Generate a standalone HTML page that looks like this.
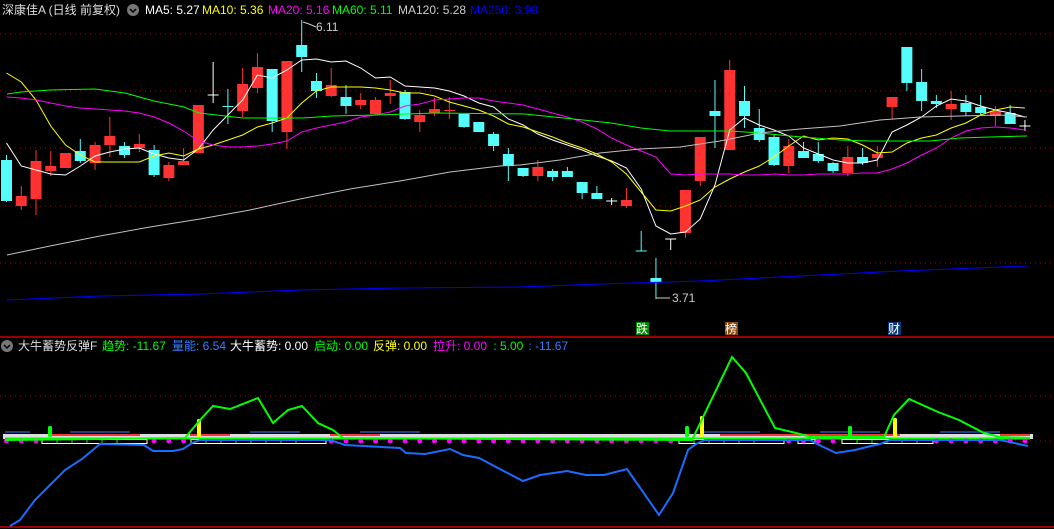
<!DOCTYPE html>
<html><head><meta charset="utf-8"><style>
html,body{margin:0;padding:0;background:#000;width:1054px;height:529px;overflow:hidden}
body{font-family:"Liberation Sans","Noto Sans CJK SC",sans-serif;font-size:12px}
.t{position:absolute;white-space:pre;line-height:14px}
svg{position:absolute;left:0;top:0}
</style></head><body>
<svg id="s" width="1054" height="529" xmlns="http://www.w3.org/2000/svg"></svg>
<div class="t" style="left:2px;top:3px;color:#ddd">深康佳A (日线 前复权)</div>
<div class="t" style="left:145px;top:3px;color:#fff">MA5: 5.27</div>
<div class="t" style="left:202px;top:3px;color:#ff0">MA10: 5.36</div>
<div class="t" style="left:268px;top:3px;color:#f0f">MA20: 5.16</div>
<div class="t" style="left:332px;top:3px;color:#0f0">MA60: 5.11</div>
<div class="t" style="left:398px;top:3px;color:#ccc">MA120: 5.28</div>
<div class="t" style="left:470px;top:3px;color:#00f">MA250: 3.98</div>
<div class="t" style="left:18px;top:339px;color:#ddd">大牛蓄势反弹F</div>
<div class="t" style="left:102px;top:339px;color:#0f0">趋势: -11.67</div>
<div class="t" style="left:172px;top:339px;color:#3a7cff">量能: 6.54</div>
<div class="t" style="left:230px;top:339px;color:#fff">大牛蓄势: 0.00</div>
<div class="t" style="left:314px;top:339px;color:#0f0">启动: 0.00</div>
<div class="t" style="left:373px;top:339px;color:#ff0">反弹: 0.00</div>
<div class="t" style="left:433px;top:339px;color:#f0f">拉升: 0.00</div>
<div class="t" style="left:490px;top:339px;color:#0f0"> : 5.00</div>
<div class="t" style="left:525px;top:339px;color:#3a7cff"> : -11.67</div>
<div class="t" style="left:316px;top:20px;color:#ccc">6.11</div>
<div class="t" style="left:672px;top:291px;color:#ccc">3.71</div>
<div class="t" style="left:636px;top:322px;width:13px;height:13px;background:#080;color:#fff;font-size:12px">跌</div>
<div class="t" style="left:725px;top:322px;width:13px;height:13px;background:#8a4a10;color:#fff;font-size:12px">榜</div>
<div class="t" style="left:888px;top:322px;width:13px;height:13px;background:#0a3a7a;color:#fff;font-size:12px">财</div>
<script>
const s=document.getElementById('s');let h='';
const X=i=>6.5+(i-1)*14.76;
[34,91,148,206,263,396].forEach(y=>h+=`<line x1="0" x2="1054" y1="${y}" y2="${y}" stroke="#a00" stroke-dasharray="1,4"/>`);
h+=`<line x1="1000" x2="1054" y1="441" y2="441" stroke="#a00" stroke-dasharray="1,4"/>`;
h+=`<line x1="0" x2="1054" y1="337" y2="337" stroke="#c00" stroke-width="1.5"/><line x1="0" x2="1054" y1="527" y2="527" stroke="#c00" stroke-width="1.5"/>`;
h+=`<circle cx="133" cy="10" r="6" fill="#777"/><path d="M130 9l3 3 3-3" stroke="#000" fill="none" stroke-width="1.5"/>`;
h+=`<circle cx="7" cy="346" r="6" fill="#777"/><path d="M4 345l3 3 3-3" stroke="#000" fill="none" stroke-width="1.5"/>`;
const C=[[160,201,155,202,'c'],[196,206,186,210,'r'],[161,199,150,215,'r'],[166,171,151,176,'r'],[153,168,153,168,'r'],[151,161,139,163,'c'],[145,163,142,170,'r'],[136,145,117,157,'r'],[146,155,142,158,'c'],[144,148,134,152,'r'],[150,175,145,177,'c'],[165,178,162,181,'r'],[161,165,148,165,'r'],[105,153,105,153,'r'],[95,95,62,103,'w'],[106,106,89,124,'c'],[84,111,68,117,'r'],[67,88,53,93,'r'],[69,121,69,132,'c'],[61,132,61,149,'r'],[45,57,20,72,'c'],[81,91,73,98,'c'],[85,96,68,97,'r'],[97,106,85,114,'c'],[100,105,93,109,'r'],[100,114,97,115,'r'],[93,96,80,104,'r'],[92,119,90,120,'c'],[115,122,110,132,'r'],[109,113,98,116,'r'],[110,111,97,119,'r'],[114,127,114,128,'c'],[122,132,122,132,'c'],[134,146,132,151,'c'],[154,166,148,181,'c'],[168,176,168,177,'c'],[167,176,160,181,'r'],[171,177,169,181,'c'],[171,177,167,177,'c'],[182,193,182,199,'c'],[193,199,186,199,'c'],[201,201,198,205,'w'],[200,206,188,208,'r'],[251,251,231,251,'cb'],[278,282,258,299,'c'],[239,239,239,250,'wt'],[190,233,190,238,'r'],[137,181,137,186,'r'],[111,116,80,148,'c'],[70,150,60,150,'r'],[101,116,86,128,'c'],[128,140,109,142,'c'],[137,165,134,166,'c'],[146,166,139,173,'r'],[151,158,142,158,'c'],[154,161,142,163,'c'],[163,171,162,173,'c'],[157,173,146,176,'r'],[157,163,148,165,'c'],[154,158,146,167,'r'],[97,107,97,119,'r'],[47,83,47,91,'c'],[82,101,69,111,'c'],[101,104,95,108,'c'],[104,109,91,120,'r'],[103,112,95,116,'c'],[107,113,95,115,'c'],[111,116,106,126,'r'],[113,124,105,124,'c'],[126,126,120,131,'w']];
const cols={c:'#54fcfc',r:'#ff3232',w:'#fff',cb:'#54fcfc',wt:'#fff'};
C.forEach((c,k)=>{const x=X(k+1),col=cols[c[4]];
 h+=`<line x1="${x}" x2="${x}" y1="${c[2]}" y2="${c[3]}" stroke="${col}"/>`;
 if(c[4]=='w'||c[4]=='cb'||c[4]=='wt'){h+=`<line x1="${x-5.5}" x2="${x+5.5}" y1="${c[0]}" y2="${c[0]}" stroke="${col}"/>`}
 else h+=`<rect x="${x-5.5}" y="${c[0]}" width="11" height="${Math.max(1,c[1]-c[0])}" fill="${col}"/>`;
});
const pl=(pts,col,w)=>h+=`<polyline fill="none" stroke="${col}" stroke-width="${w||1}" points="${pts.map(p=>p.join(',')).join(' ')}"/>`;
const ix=a=>a.map((y,k)=>[X(k+1),y]);
pl(ix([143,166,170,174,175,166,156,152,149,148,154,158,160,149,130,115,100,75,78,70,60,59,62,61,68,78,77,86,87,88,91,96,103,107,119,125,134,140,145,150,156,161,168,189,226,234,232,219,185,130,118,125,130,136,148,154,160,163,163,160,132,125,117,106,99,101,106,110,113,117]),'#fff');
pl(ix([73,82,100,126,145,155,162,162,162,162,156,153,156,149,145,140,135,127,123,118,103,91,87,87,87,88,90,93,93,96,102,106,110,116,124,127,132,137,143,148,154,162,174,192,210,211,206,200,187,179,172,166,157,146,136,140,138,139,145,153,152,143,138,135,128,123,115,110,107,108]),'#ff0');
pl(ix([97,98,100,103,106,108,109,110,111,113,117,123,131,141,145,147,147,146,144,141,132,128,125,122,117,115,112,106,104,100,99,98,98,101,103,105,109,113,117,122,129,138,145,151,157,174,175,174,174,174,175,175,174,175,175,174,174,174,173,173,169,163,155,148,138,131,128,127,128,130]),'#f0f');
pl([[7,94],[21,92],[50,90],[95,89],[125,93],[154,101],[184,107],[199,113],[243,118],[303,118],[332,116],[376,115],[435,113],[525,114],[554,117],[583,120],[611,123],[641,128],[670,131],[730,131],[760,133],[790,136],[815,138],[840,140],[870,141],[930,141],[960,138],[990,137],[1027,136]],'#0f0');
pl([[7,255],[50,246],[100,236],[150,227],[200,219],[250,210],[300,199],[350,189],[400,181],[450,172],[500,166],[520,165],[560,160],[600,153],[640,149],[680,147],[720,141],[760,133],[800,129],[840,126],[880,120],[920,117],[960,116],[1000,115],[1027,117]],'#c0c0c0');
pl([[7,300],[100,296],[200,294],[300,290],[400,288],[520,287],[600,284],[700,281],[800,276],[900,271],[1027,266]],'#00f');
h+=`<polyline points="303,22 309,24 316,27" stroke="#ccc" fill="none"/><polyline points="656,299 656,298 670,298" stroke="#ccc" fill="none"/>`;
h+=`<rect x="3" y="434" width="1030" height="5" fill="#ddd"/>`;
h+=`<line x1="5" x2="1030" y1="438.5" y2="438.5" stroke="#0f0" stroke-width="2"/>`;
[[50,140],[190,230],[330,380],[720,900],[1000,1030]].forEach(a=>h+=`<line x1="${a[0]}" x2="${a[1]}" y1="435" y2="435" stroke="#f00" stroke-width="1.5"/>`);
[[5,30],[70,130],[250,300],[360,420],[700,760],[820,880],[940,1000]].forEach(a=>h+=`<line x1="${a[0]}" x2="${a[1]}" y1="432" y2="432" stroke="#3a7cff"/>`);
[[42,147],[191,326],[679,784],[798,815],[842,933]].forEach(a=>{h+=`<rect x="${a[0]}" y="439.5" width="${a[1]-a[0]}" height="4" fill="#000" stroke="#fff"/>`;for(let x=a[0]+15;x<a[1]-15;x+=15)h+=`<line x1="${x}" x2="${x}" y1="440" y2="443" stroke="#0f0"/>`;});
for(let k=1;k<=70;k++){const x=X(k);if((x>42&&x<147)||(x>191&&x<326)||(x>679&&x<784)||(x>842&&x<933))continue;h+=`<circle cx="${x}" cy="441" r="2.5" fill="#f0f"/>`;}
[[48,426],[685,426],[848,426]].forEach(b=>h+=`<rect x="${b[0]}" y="${b[1]}" width="4" height="11" rx="1.5" fill="#0f0"/>`);
[[197,419],[700,416],[893,418]].forEach(b=>h+=`<rect x="${b[0]}" y="${b[1]}" width="4" height="${437-b[1]}" rx="1.5" fill="#ff0"/>`);
pl([[5,440],[185,438],[200,420],[213,406],[230,409],[258,398],[273,423],[288,410],[302,406],[318,423],[333,430],[343,438],[690,440],[692,440],[732,357],[746,373],[775,428],[796,433],[811,437],[884,437],[894,415],[909,399],[938,412],[959,420],[984,433],[1000,437],[1030,438]],'#0f0',2);
pl([[10,526],[20,520],[35,500],[50,485],[65,470],[82,459],[100,444],[144,445],[153,451],[173,451],[183,449],[192,443],[200,440],[330,440],[345,445],[400,448],[406,453],[425,454],[450,449],[463,455],[479,458],[496,467],[523,481],[540,475],[567,471],[586,475],[604,475],[627,469],[659,515],[673,493],[688,450],[696,444],[705,440],[810,440],[815,443],[836,453],[855,450],[871,446],[880,444],[890,440],[1000,440],[1028,446]],'#1a6cff',2);
s.innerHTML=h;
</script>
</body></html>
